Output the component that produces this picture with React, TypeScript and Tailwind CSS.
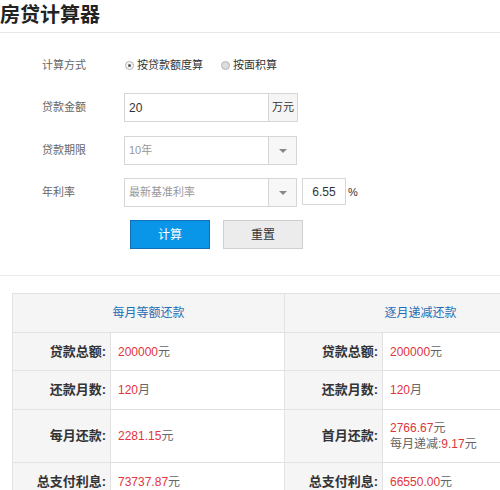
const font = { fontFamily: '"Liberation Sans", "Noto Sans CJK SC", sans-serif' };

function Radio({ checked, label }: { checked?: boolean; label: string }) {
  return (
    <label className="flex items-center gap-[3px] text-[11px] text-[#333]">
      <span
        className={
          "flex h-[9px] w-[9px] items-center justify-center rounded-full border border-[#b5b5b5] " +
          (checked ? "bg-[#f4f4f4]" : "bg-[#dcdcdc]")
        }
      >
        {checked && <span className="h-[3px] w-[3px] rounded-full bg-[#555]" />}
      </span>
      {label}
    </label>
  );
}

function Arrow() {
  return (
    <div className="flex h-full w-[28px] items-center justify-center border-l border-[#d6d6d6] bg-[#f7f7f7]">
      <svg width="8" height="4" viewBox="0 0 8 4">
        <path d="M0 0h8L4 4z" fill="#888" />
      </svg>
    </div>
  );
}

function FormRow({ label, children, className = "" }: { label: string; children: React.ReactNode; className?: string }) {
  return (
    <div className={"flex h-[29px] items-center " + className}>
      <div className="w-[124px] pl-[42px] text-[11px] text-[#666]">{label}</div>
      <div className="flex h-full items-center">{children}</div>
    </div>
  );
}

type Cell = { label: string; value: React.ReactNode };

const left: Cell[] = [
  { label: "贷款总额:", value: <><span className="text-[#e0353d]">200000</span>元</> },
  { label: "还款月数:", value: <><span className="text-[#e0353d]">120</span>月</> },
  { label: "每月还款:", value: <><span className="text-[#e0353d]">2281.15</span>元</> },
  { label: "总支付利息:", value: <><span className="text-[#e0353d]">73737.87</span>元</> },
];

const right: Cell[] = [
  { label: "贷款总额:", value: <><span className="text-[#e0353d]">200000</span>元</> },
  { label: "还款月数:", value: <><span className="text-[#e0353d]">120</span>月</> },
  {
    label: "首月还款:",
    value: (
      <div className="leading-[16px]">
        <div><span className="text-[#e0353d]">2766.67</span>元</div>
        <div>每月递减:<span className="text-[#e0353d]">9.17</span>元</div>
      </div>
    ),
  },
  { label: "总支付利息:", value: <><span className="text-[#e0353d]">66550.00</span>元</> },
];

const heights = ["h-[38px]", "h-[39px]", "h-[53px]", "h-[39px]"];

export default function App() {
  return (
    <div className="h-[490px] w-[500px] overflow-hidden bg-white" style={font}>
      <h1 className="h-[33px] border-b border-[#e8e8e8] text-[20px] font-bold leading-[30px] text-[#222]">
        房贷计算器
      </h1>

      <FormRow label="计算方式" className="mt-[18px]">
        <div className="flex items-center gap-[18px] pl-[1px]">
          <Radio checked label="按贷款额度算" />
          <Radio label="按面积算" />
        </div>
      </FormRow>

      <FormRow label="贷款金额" className="mt-[13px]">
        <div className="flex h-[29px] w-[174px] border border-[#d6d6d6]">
          <div className="flex flex-1 items-center pl-[4px] text-[12px] text-[#333]">20</div>
          <div className="flex w-[29px] items-center justify-center border-l border-[#d6d6d6] bg-[#f5f5f5] text-[11px] text-[#333]">
            万元
          </div>
        </div>
      </FormRow>

      <FormRow label="贷款期限" className="mt-[14px]">
        <div className="flex h-[29px] w-[173px] border border-[#d6d6d6]">
          <div className="flex flex-1 items-center pl-[4px] text-[11px] text-[#999]">10年</div>
          <Arrow />
        </div>
      </FormRow>

      <FormRow label="年利率" className="mt-[13px]">
        <div className="flex h-[29px] w-[173px] border border-[#d6d6d6]">
          <div className="flex flex-1 items-center pl-[4px] text-[11px] text-[#999]">最新基准利率</div>
          <Arrow />
        </div>
        <div className="ml-[5px] flex h-[27px] w-[44px] items-center justify-center self-start border border-[#d6d6d6] text-[12px] text-[#333]">
          6.55
        </div>
        <span className="ml-[2px] text-[11px] text-[#333]">%</span>
      </FormRow>

      <div className="mt-[13px] flex gap-[13px] pl-[130px]">
        <button className="h-[29px] w-[80px] border border-[#1470b5] bg-[#0a96e8] text-[12px] text-white">计算</button>
        <button className="h-[29px] w-[80px] border border-[#cfcfcf] bg-[#ececec] text-[12px] text-[#333]">重置</button>
      </div>

      <div className="mt-[26px] border-t border-[#ebebeb]" />

      <table className="ml-[12px] mt-[17px] w-[544px] table-fixed border-collapse text-[12px]">
        <colgroup>
          <col className="w-[98px]" />
          <col className="w-[174px]" />
          <col className="w-[98px]" />
          <col className="w-[174px]" />
        </colgroup>
        <thead>
          <tr className="h-[39px] bg-[#f5f5f5]">
            <th colSpan={2} className="border border-[#e2e2e2] text-[12px] font-normal text-[#1f6db5]">每月等额还款</th>
            <th colSpan={2} className="border border-[#e2e2e2] text-[12px] font-normal text-[#1f6db5]">逐月递减还款</th>
          </tr>
        </thead>
        <tbody>
          {left.map((l, i) => (
            <tr key={i} className={heights[i]}>
              <td className="border border-[#e2e2e2] bg-[#f5f5f5] pr-[4px] text-right text-[13px] font-bold text-[#333]">{l.label}</td>
              <td className="border border-[#e2e2e2] pl-[7px] text-[#666]">{l.value}</td>
              <td className="border border-[#e2e2e2] bg-[#f5f5f5] pr-[4px] text-right text-[13px] font-bold text-[#333]">{right[i].label}</td>
              <td className="border border-[#e2e2e2] pl-[7px] text-[#666]">{right[i].value}</td>
            </tr>
          ))}
        </tbody>
      </table>
    </div>
  );
}
